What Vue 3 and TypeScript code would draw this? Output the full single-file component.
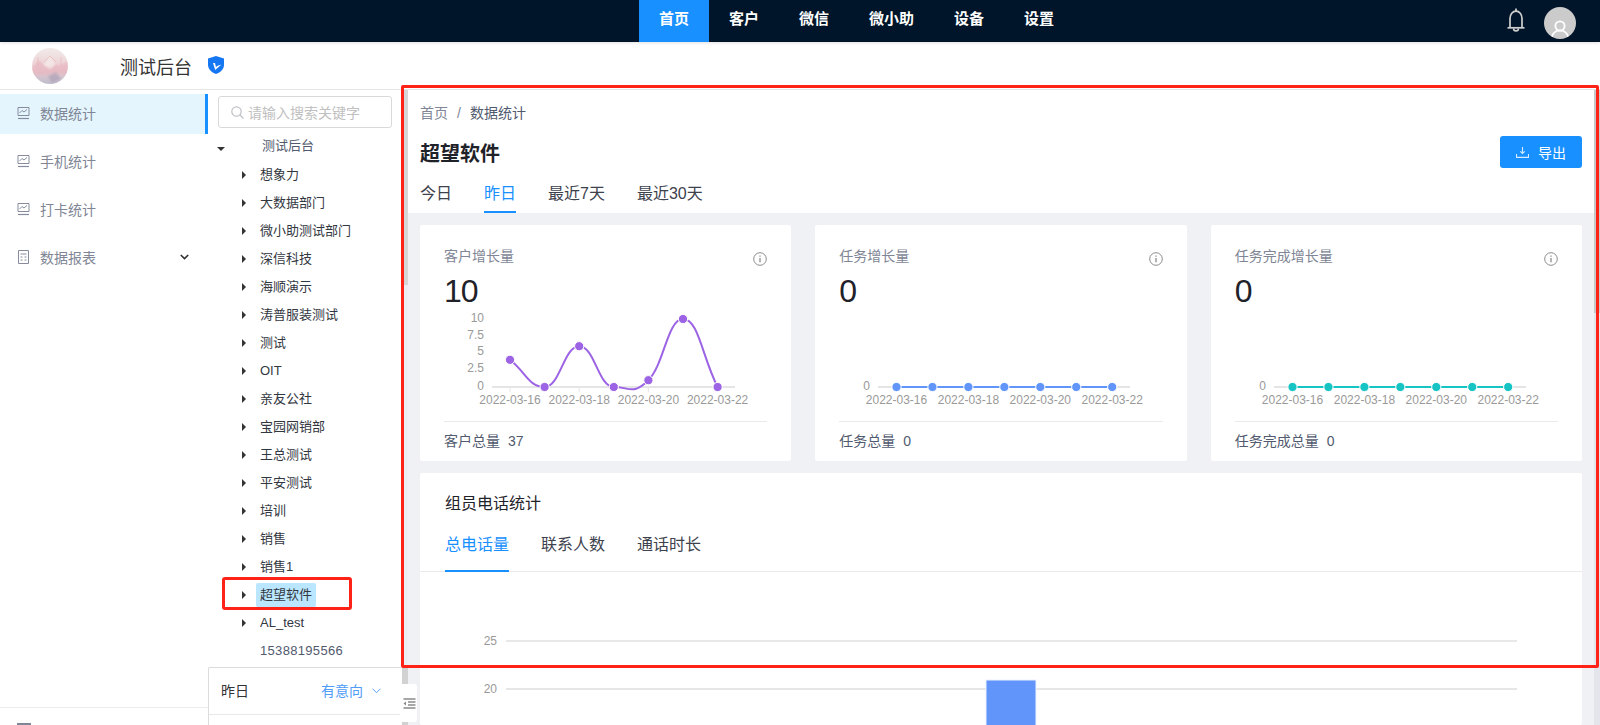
<template>
  <div class="app">
    <header class="topnav">
      <nav class="nav-list">
        <a v-for="(item, i) in navItems" :key="item" class="nav-item" :class="{ active: i === 0 }">{{ item }}</a>
      </nav>
      <div class="nav-right">
        <svg class="bell" width="18" height="24" viewBox="0 0 18 24" fill="none" stroke="#cfcfcf" stroke-width="1.7">
          <path d="M9 .5v2.600" />
          <path d="M3 19.500V10.500a6 7.400 0 0 1 12 0v9" />
          <path d="M.5 19.800h17" />
          <path d="M6.600 20.400a2.400 2.400 0 0 0 4.800 0" />
        </svg>
        <svg class="user" width="32" height="32" viewBox="0 0 32 32">
          <clipPath id="userClip"><circle cx="16" cy="16" r="16" /></clipPath>
          <circle cx="16" cy="16" r="16" fill="#cbcbcb" />
          <g clip-path="url(#userClip)" fill="none" stroke="#fff" stroke-width="1.800">
            <circle cx="16" cy="19" r="4.600" />
            <path d="M7.500 33c0-6 3.600-9.600 8.500-9.600s8.500 3.600 8.500 9.600" />
          </g>
        </svg>
      </div>
    </header>

    <div class="subhead">
      <svg class="logo" width="36" height="36" viewBox="0 0 36 36">
        <defs>
          <linearGradient id="logoBg" x1="0" y1="0" x2="0" y2="1">
            <stop offset="0" stop-color="#f1ebe9" />
            <stop offset=".6" stop-color="#ecccd1" />
            <stop offset="1" stop-color="#bdbccb" />
          </linearGradient>
          <clipPath id="logoClip"><circle cx="18" cy="18" r="18" /></clipPath>
          <filter id="logoSoft"><feGaussianBlur stdDeviation=".8" /></filter>
        </defs>
        <circle cx="18" cy="18" r="18" fill="url(#logoBg)" />
        <g clip-path="url(#logoClip)">
          <g filter="url(#logoSoft)">
            <polygon points="0,20 7,12 14,19 19,10 27,18 36,13 36,27 24,25 12,27 0,27" fill="#e6b1bb" opacity=".6" />
            <polygon points="12,17 18,8 24,16 18,21" fill="#f6eeee" opacity=".8" />
            <polygon points="16,28 24,24 29,31 20,35" fill="#a79bb0" opacity=".6" />
          </g>
          <path d="M6 9v9M29 9v9M12 14l6-6 6 6" fill="none" stroke="#e6a9a9" stroke-width=".5" />
        </g>
      </svg>
      <span class="brand">测试后台</span>
      <svg class="shield" width="16" height="18" viewBox="0 0 16 18">
        <path d="M8 0l8 2.600v6.200c0 4.300-3.200 7.500-8 9.200-4.800-1.700-8-4.900-8-9.200V2.600z" fill="#1677f2" />
        <path d="M5 7l2.200 7 6.300-5.500-4.500 1.500-1 1.200L7 7z" fill="#fff" />
      </svg>
    </div>

    <div class="body">
      <aside class="sidebar">
        <ul class="menu">
          <li v-for="(item, i) in menuItems" :key="item.label" class="menu-item" :class="{ active: i === 0 }">
            <svg v-if="item.icon === 'chart'" width="13" height="13" viewBox="0 0 13 13" fill="none" stroke="#868c9e">
              <path d="M1 8.500V.5h11v8z" />
              <path d="M2.500 6l2.500-2.500 2 1.500 3-2.500" />
              <path d="M1 11.500h11" stroke-width="1.200" />
            </svg>
            <svg v-else width="13" height="14" viewBox="0 0 13 14" fill="none" stroke="#868c9e">
              <path d="M1.500.5h10v13h-10z" />
              <path d="M3.500 4h6M3.500 7h2M7.500 7h2M3.500 10h2M7.500 10h2" />
            </svg>
            <span class="menu-text">{{ item.label }}</span>
            <svg v-if="item.more" class="menu-arrow" width="9" height="6" viewBox="0 0 9 6" fill="none" stroke="#333" stroke-width="1.700">
              <path d="M.8 1l3.700 3.500L8.200 1" />
            </svg>
          </li>
        </ul>
        <div class="side-foot">
          <span class="foot-icon"></span>
        </div>
      </aside>

      <section class="panel">
        <div class="search">
          <svg width="13" height="13" viewBox="0 0 13 13" fill="none" stroke="#bfc2c8" stroke-width="1.200">
            <circle cx="5.500" cy="5.500" r="4.700" />
            <path d="M9 9l3.500 3.500" />
          </svg>
          <span>请输入搜索关键字</span>
        </div>
        <div class="tree">
          <div class="tree-row root">
            <i class="caret-down"></i>
            <span class="node">测试后台</span>
          </div>
          <div v-for="node in treeNodes" :key="node.name" class="tree-row child">
            <i class="caret" :class="{ hidden: node.leaf }"></i>
            <span class="node" :class="{ selected: node.name === '超望软件', phone: node.leaf }">{{ node.name }}</span>
          </div>
        </div>
        <div class="filter">
          <div class="filter-row">
            <span>昨日</span>
            <span class="filter-pick">
              有意向
              <svg width="9" height="6" viewBox="0 0 9 6" fill="none" stroke="#5a9ff5">
                <path d="M.5.7l4 4 4-4" />
              </svg>
            </span>
          </div>
        </div>
        <button class="collapse" type="button">
          <svg width="13" height="11" viewBox="0 0 13 11" stroke="#8a8a8a" stroke-width="1.300" fill="none">
            <path d="M.5 1h12M5 4h7.500M5 7h7.500M.5 10h12" />
            <path d="M3 3.500v4L.5 5.500z" fill="#8a8a8a" stroke="none" />
          </svg>
        </button>
      </section>

      <main class="main">
        <div class="scroll-left"></div>
        <div class="content">
          <div class="head">
            <div class="crumb">
              <span>首页</span>
              <span class="sep">/</span>
              <span class="current">数据统计</span>
            </div>
            <div class="title-row">
              <h1>超望软件</h1>
              <button class="export" type="button">
                <svg width="13" height="12" viewBox="0 0 13 12" fill="none" stroke="#d6ebff" stroke-width="1.100">
                  <path d="M6.500 1v6M4.300 5.300l2.200 2.200 2.200-2.200" />
                  <path d="M.5 8v3.400h12V8" />
                </svg>
                导出
              </button>
            </div>
            <div class="day-tabs">
              <span v-for="(tab, i) in dayTabs" :key="tab" class="day-tab" :class="{ active: i === 1 }">{{ tab }}</span>
            </div>
          </div>

          <div class="stats">
            <div class="cards">
              <article v-for="card in cards" :key="card.label" class="card">
                <div class="card-head">
                  <span class="card-label">{{ card.label }}</span>
                  <svg class="info" width="14" height="14" viewBox="0 0 14 14" fill="none" stroke="#8c8c8c">
                    <circle cx="7" cy="7" r="6.300" />
                    <path d="M7 6v4.200" stroke-width="1.300" />
                    <path d="M7 3.500v1.300" stroke-width="1.300" />
                  </svg>
                </div>
                <div class="card-num">{{ card.value }}</div>
                <svg class="spark" width="323" height="112" viewBox="0 0 323 112">
                  <line :x1="card.axisStart" y1="78" x2="291" y2="78" stroke="#dcdcdc" stroke-width="1.500" />
                  <line v-for="d in labelDates" :key="d.index" :x1="pointX(card, d.index)" y1="78" :x2="pointX(card, d.index)" y2="83" stroke="#e6e6e6" />
                  <text v-for="tick in card.ticks" :key="tick.label" :x="card.axisStart - 8" :y="tick.y + 4" text-anchor="end" class="axis">{{ tick.label }}</text>
                  <text v-for="d in labelDates" :key="d.text" :x="pointX(card, d.index)" y="95" text-anchor="middle" class="axis">{{ d.text }}</text>
                  <path :d="linePath(card)" fill="none" :stroke="card.color" stroke-width="2" />
                  <circle v-for="(v, i) in card.data" :key="i" :cx="pointX(card, i)" :cy="pointY(v)" r="4.600" :fill="card.color" stroke="#fff" stroke-width="1" />
                </svg>
                <div class="card-foot">
                  <span>{{ card.totalLabel }}</span>
                  <span>{{ card.total }}</span>
                </div>
              </article>
            </div>

            <article class="calls">
              <h3>组员电话统计</h3>
              <div class="call-tabs">
                <span v-for="(tab, i) in callTabs" :key="tab" class="call-tab" :class="{ active: i === 0 }">{{ tab }}</span>
              </div>
              <svg class="bars" width="1162" height="153" viewBox="0 0 1162 153">
                <line x1="86" y1="69" x2="1097" y2="69" stroke="#e8e8e8" stroke-width="2" />
                <line x1="86" y1="117" x2="1097" y2="117" stroke="#dedede" stroke-width="1.500" />
                <text x="77" y="73" text-anchor="end" class="axis">25</text>
                <text x="77" y="121" text-anchor="end" class="axis">20</text>
                <rect x="566" y="108" width="50" height="60" fill="#6195f9" stroke="#edf2ff" />
              </svg>
            </article>
          </div>
        </div>
        <div class="scroll-right"></div>
      </main>
    </div>

    <div class="mark mark-main"></div>
    <div class="mark mark-node"></div>
  </div>
</template>

<script setup lang="ts">
interface StatCard {
  label: string
  value: number
  totalLabel: string
  total: number
  color: string
  axisStart: number
  firstX: number
  stepX: number
  data: number[]
  ticks: { label: string; y: number }[]
}

const navItems = ['首页', '客户', '微信', '微小助', '设备', '设置']

const menuItems = [
  { label: '数据统计', icon: 'chart', more: false },
  { label: '手机统计', icon: 'chart', more: false },
  { label: '打卡统计', icon: 'chart', more: false },
  { label: '数据报表', icon: 'table', more: true },
]

const treeNodes = [
  '想象力',
  '大数据部门',
  '微小助测试部门',
  '深信科技',
  '海顺演示',
  '涛普服装测试',
  '测试',
  'OIT',
  '亲友公社',
  '宝园网销部',
  '王总测试',
  '平安测试',
  '培训',
  '销售',
  '销售1',
  '超望软件',
  'AL_test',
  '15388195566',
].map((name) => ({ name, leaf: name === '15388195566' }))

const dayTabs = ['今日', '昨日', '最近7天', '最近30天']
const callTabs = ['总电话量', '联系人数', '通话时长']

const labelDates = [
  { index: 0, text: '2022-03-16' },
  { index: 2, text: '2022-03-18' },
  { index: 4, text: '2022-03-20' },
  { index: 6, text: '2022-03-22' },
]

const cards: StatCard[] = [
  {
    label: '客户增长量',
    value: 10,
    totalLabel: '客户总量',
    total: 37,
    color: '#9c64e4',
    axisStart: 48,
    firstX: 66,
    stepX: 34.6,
    data: [4, 0, 6, 0, 1, 10, 0],
    ticks: [
      { label: '10', y: 9 },
      { label: '7.5', y: 26 },
      { label: '5', y: 42 },
      { label: '2.5', y: 59 },
      { label: '0', y: 77 },
    ],
  },
  {
    label: '任务增长量',
    value: 0,
    totalLabel: '任务总量',
    total: 0,
    color: '#6195f9',
    axisStart: 39,
    firstX: 57.5,
    stepX: 35.95,
    data: [0, 0, 0, 0, 0, 0, 0],
    ticks: [{ label: '0', y: 77 }],
  },
  {
    label: '任务完成增长量',
    value: 0,
    totalLabel: '任务完成总量',
    total: 0,
    color: '#16c4c4',
    axisStart: 39,
    firstX: 57.5,
    stepX: 35.95,
    data: [0, 0, 0, 0, 0, 0, 0],
    ticks: [{ label: '0', y: 77 }],
  },
]

const pointX = (card: StatCard, i: number) => card.firstX + card.stepX * i
const pointY = (v: number) => 78 - v * 6.8

// smooth line, flat at the peaks and valleys so it looks like the chart lib
function linePath(card: StatCard) {
  const xs = card.data.map((_, i) => pointX(card, i))
  const ys = card.data.map(pointY)
  const slope = ys.map((y, i) => {
    if (i === 0) return (ys[1] - y) / card.stepX
    if (i === ys.length - 1) return (y - ys[i - 1]) / card.stepX
    if ((y - ys[i - 1]) * (ys[i + 1] - y) <= 0) return 0
    return (ys[i + 1] - ys[i - 1]) / (2 * card.stepX)
  })
  let d = `M${xs[0]} ${ys[0]}`
  for (let i = 1; i < xs.length; i++) {
    const c = card.stepX * 0.45
    d += ` C${xs[i - 1] + c} ${ys[i - 1] + slope[i - 1] * c} ${xs[i] - c} ${ys[i] - slope[i] * c} ${xs[i]} ${ys[i]}`
  }
  return d
}
</script>

<style>
html,
body {
  margin: 0;
  background: #fff;
}
</style>

<style scoped>
.app {
  position: relative;
  width: 1600px;
  height: 725px;
  overflow: hidden;
  display: flex;
  flex-direction: column;
  font-family: 'Liberation Sans', 'Noto Sans CJK SC', sans-serif;
  color: #333;
}

.topnav {
  flex: none;
  height: 42px;
  display: flex;
  justify-content: space-between;
  padding-left: 639px;
  background: #001529;
  box-shadow: 0 1px 3px rgba(0, 0, 0, 0.12);
}

.nav-list {
  display: flex;
}

.nav-item {
  padding: 0 20px;
  line-height: 38px;
  font-size: 15px;
  font-weight: 700;
  color: #fff;
}

.nav-item.active {
  background: #1890ff;
}

.nav-right {
  display: flex;
  align-items: center;
  gap: 19px;
  padding-right: 24px;
}

.bell {
  margin-top: -2px;
}

.user {
  margin-top: 4px;
}

.subhead {
  flex: none;
  height: 48px;
  box-sizing: border-box;
  display: flex;
  align-items: center;
  padding: 0 0 0 32px;
  border-bottom: 1px solid #e6e6e6;
}

.logo {
  margin-top: 1px;
}

.brand {
  margin: 0 16px 0 52px;
  font-size: 18px;
  color: #333;
}

.shield {
  margin-top: -1px;
}

.body {
  flex: 1;
  min-height: 0;
  display: flex;
}

.sidebar {
  flex: none;
  width: 208px;
  display: flex;
  flex-direction: column;
}

.menu {
  flex: 1;
  margin: 0;
  padding: 4px 0 0;
  list-style: none;
}

.menu-item {
  height: 40px;
  box-sizing: border-box;
  margin-bottom: 8px;
  padding: 0 19px 2px 17px;
  display: flex;
  align-items: center;
  font-size: 14px;
  color: #808695;
}

.menu-item.active {
  background: #e4f5fe;
  border-right: 3px solid #1890ff;
}

.menu-text {
  margin-left: 10px;
}

.menu-arrow {
  margin-left: auto;
}

.side-foot {
  height: 18px;
  box-sizing: border-box;
  border-top: 1px solid #ececec;
  padding: 15px 0 0 17px;
}

.foot-icon {
  display: block;
  width: 14px;
  height: 8px;
  background: #7f8698;
}

.panel {
  position: relative;
  z-index: 1;
  flex: none;
  width: 194px;
  display: flex;
  flex-direction: column;
}

.search {
  flex: none;
  box-sizing: border-box;
  width: 174px;
  height: 32px;
  margin: 6px 0 0 10px;
  padding-left: 12px;
  display: flex;
  align-items: center;
  gap: 4px;
  border: 1px solid #d9d9d9;
  border-radius: 3px;
  font-size: 14px;
  color: #c0c0c0;
}

.tree {
  flex: none;
  padding-top: 5px;
  font-size: 13px;
}

.tree-row {
  height: 28px;
  display: flex;
  align-items: center;
  color: #33373f;
}

.tree-row.root {
  padding-left: 9px;
}

.tree-row.root .node {
  margin: -2px 0 0 33px;
  color: #515a6e;
}

.tree-row.child {
  padding-left: 34px;
}

.caret-down {
  width: 0;
  height: 0;
  border-left: 4px solid transparent;
  border-right: 4px solid transparent;
  border-top: 4px solid #333;
  margin-top: 3px;
}

.caret {
  width: 0;
  height: 0;
  border-top: 4px solid transparent;
  border-bottom: 4px solid transparent;
  border-left: 4px solid #333;
}

.caret.hidden {
  visibility: hidden;
}

.node {
  margin-left: 10px;
  padding: 0 4px;
  line-height: 24px;
  border-radius: 2px;
}

.node.selected {
  background: #bae7ff;
}

.node.phone {
  letter-spacing: 0.32px;
  color: #515a6e;
}

.filter {
  flex: 1;
  margin-top: 2px;
  width: 193px;
  box-sizing: border-box;
  background: #fff;
  border: 1px solid #dcdcdc;
  border-right: none;
  border-bottom: none;
  border-radius: 2px 0 0 0;
}

.filter-row {
  height: 47px;
  box-sizing: border-box;
  padding: 0 20px 3px 12px;
  display: flex;
  justify-content: space-between;
  align-items: center;
  border-bottom: 1px solid #e8e8e8;
  font-size: 14px;
}

.filter-pick {
  display: flex;
  align-items: center;
  gap: 9px;
  color: #4f9cf9;
}

.filter-pick svg {
  margin-top: 3px;
}

.collapse {
  position: absolute;
  left: 192px;
  top: 594px;
  width: 17px;
  height: 38px;
  padding: 0 0 0 3px;
  border: none;
  border-radius: 3px;
  background: #fff;
  display: flex;
  align-items: center;
}

.main {
  flex: 1;
  min-width: 0;
  display: flex;
}

.scroll-left {
  flex: none;
  width: 6px;
  background: linear-gradient(#d6d6d6 0, #d6d6d6 195px, #eceef1 195px, #eceef1 576px, #d2d2d2 576px);
}

.scroll-right {
  flex: none;
  width: 6px;
  background: linear-gradient(#c8c8c8 0, #c8c8c8 223px, #e3e5ea 223px);
}

.content {
  flex: 1;
  min-width: 0;
  display: flex;
  flex-direction: column;
}

.head {
  flex: none;
  padding: 12px 12px 0;
  background: #fff;
}

.crumb {
  display: flex;
  gap: 8px;
  line-height: 22px;
  font-size: 14px;
  color: #808695;
}

.crumb .sep {
  margin: 0 1px;
}

.crumb .current {
  color: #515a6e;
}

.title-row {
  margin-top: 12px;
  display: flex;
  justify-content: space-between;
  align-items: center;
  height: 32px;
}

h1 {
  margin: 0;
  font-size: 20px;
  font-weight: 700;
  color: #1f2229;
}

.export {
  width: 82px;
  height: 32px;
  padding: 0;
  border: none;
  border-radius: 3px;
  background: #1890ff;
  color: #fff;
  font: inherit;
  font-size: 14px;
  display: flex;
  align-items: center;
  justify-content: center;
  gap: 9px;
}

.day-tabs {
  margin-top: 8px;
  display: flex;
  gap: 32px;
}

.day-tab {
  box-sizing: border-box;
  height: 37px;
  padding-top: 1px;
  line-height: 34px;
  font-size: 16px;
  color: #3d424d;
}

.day-tab.active {
  color: #1890ff;
  border-bottom: 2px solid #1890ff;
}

.stats {
  flex: 1;
  min-height: 0;
  padding: 12px;
  background: #eff1f5;
}

.cards {
  display: flex;
  gap: 24px;
}

.card {
  flex: 1;
  min-width: 0;
  box-sizing: border-box;
  height: 236px;
  padding: 20px 24px 0;
  background: #fff;
  border-radius: 2px;
}

.card-head {
  display: flex;
  justify-content: space-between;
}

.card-label {
  font-size: 14px;
  line-height: 22px;
  color: #808695;
}

.info {
  margin: 7px 0 0;
}

.card-num {
  margin-top: 6px;
  font-size: 32px;
  letter-spacing: -1px;
  line-height: 36px;
  color: #1f2229;
}

.spark {
  display: block;
  overflow: visible;
}

.axis {
  font-size: 12px;
  fill: #999;
}

.card-foot {
  display: flex;
  gap: 8px;
  padding-top: 8px;
  border-top: 1px solid #e8eaec;
  font-size: 14px;
  line-height: 22px;
  color: #515a6e;
}

.calls {
  margin-top: 12px;
  background: #fff;
  border-radius: 2px;
  padding-top: 19px;
}

h3 {
  margin: 0 0 9px 25px;
  font-size: 16px;
  font-weight: 400;
  line-height: 24px;
  color: #1f2229;
}

.call-tabs {
  display: flex;
  gap: 32px;
  height: 47px;
  box-sizing: border-box;
  padding-left: 25px;
  border-bottom: 1px solid #e8eaec;
}

.call-tab {
  box-sizing: border-box;
  height: 47px;
  line-height: 40px;
  font-size: 16px;
  color: #3d424d;
}

.call-tab.active {
  color: #1890ff;
  border-bottom: 2px solid #1890ff;
}

.bars {
  display: block;
}

/* red annotation frames drawn on the screenshot */
.mark {
  position: absolute;
  z-index: 5;
  box-sizing: border-box;
  border: 3px solid #ff2216;
  border-radius: 2px;
  pointer-events: none;
}

.mark-main {
  left: 401px;
  top: 85px;
  width: 1198px;
  height: 583px;
}

.mark-node {
  left: 222px;
  top: 577px;
  width: 130px;
  height: 33px;
  border-radius: 3px;
}
</style>
